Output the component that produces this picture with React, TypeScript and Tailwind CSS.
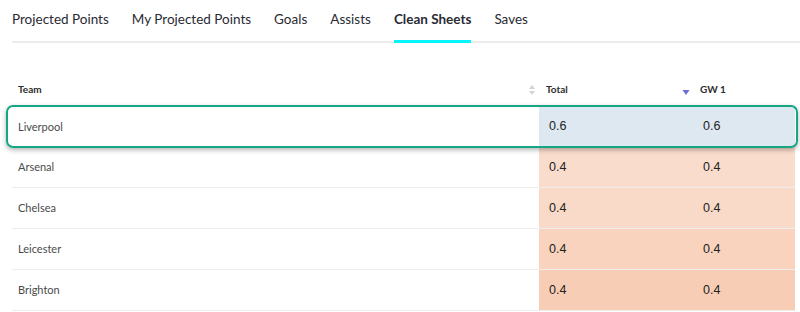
import React from 'react';

const tabs = ['Projected Points', 'My Projected Points', 'Goals', 'Assists', 'Clean Sheets', 'Saves'];

interface Row {
  team: string;
  total: string;
  gw: string;
  bg: string;
}

const rows: Row[] = [
  { team: 'Arsenal', total: '0.4', gw: '0.4', bg: 'bg-[#fadccd]' },
  { team: 'Chelsea', total: '0.4', gw: '0.4', bg: 'bg-[#f9d9c8]' },
  { team: 'Leicester', total: '0.4', gw: '0.4', bg: 'bg-[#f9d3be]' },
  { team: 'Brighton', total: '0.4', gw: '0.4', bg: 'bg-[#f8cdb6]' },
];

export default function App() {
  return (
    <div className="w-[800px] h-[312px] overflow-hidden bg-white font-['Lato',sans-serif]">
      {/* tabs */}
      <div className="ml-3 flex gap-[23px] border-b-2 border-[#ececec]">
        {tabs.map((t) => (
          <div
            key={t}
            className={
              t === 'Clean Sheets'
                ? 'pt-[9px] pb-[11px] -mb-[2px] border-b-[3px] border-[#04f5ff] text-[13.5px] font-bold text-[#2a2a33]'
                : 'pt-[9px] pb-[11px] -mb-[2px] border-b-[3px] border-transparent text-[13.5px] text-[#2a2a33]'
            }
          >
            {t}
          </div>
        ))}
      </div>

      {/* table */}
      <div className="mt-[36px] ml-3 mr-[5px]">
        <div className="grid grid-cols-[513px_154px_116px] h-[21px] items-center text-[10px] font-bold text-[#2d2d2d]">
          <div className="pl-[6px]">Team</div>
          <div className="flex items-center gap-[10px] pl-[3px]">
            <svg width="8" height="12" viewBox="0 0 8 12">
              <path d="M4 1 L7 5 H1 Z" fill="#d4d4d4" />
              <path d="M4 11 L7 7 H1 Z" fill="#d4d4d4" />
            </svg>
            <span>Total</span>
          </div>
          <div className="flex items-center gap-[10px] pl-[3px]">
            <svg width="8" height="12" viewBox="0 0 8 12" className="mt-[5px]">
              <path d="M4 9 L7.5 4 H0.5 Z" fill="#6c6cd6" />
            </svg>
            <span>GW 1</span>
          </div>
        </div>

        {/* highlighted row */}
        <div className="relative mt-[6px] grid grid-cols-[527px_154px_102px] h-[41px] items-center">
          <div className="pl-[6px] text-[11px] text-[#4a4a4a]">Liverpool</div>
          <div className="h-full flex items-center pl-[10px] bg-[#dde8f0] font-['Liberation_Sans',sans-serif] text-[12.5px] text-[#222]">0.6</div>
          <div className="h-full flex items-center pl-[10px] bg-[#dde8f0] font-['Liberation_Sans',sans-serif] text-[12.5px] text-[#222]">0.6</div>
          <div className="absolute -left-[6px] -right-[3px] -top-[1px] -bottom-[1px] rounded-[7px] border-[2.5px] border-[#17a683] shadow-[0_2px_5px_rgba(0,0,0,0.3)] pointer-events-none" />
        </div>

        {rows.map((r) => (
          <div key={r.team} className="grid grid-cols-[527px_154px_102px] h-[41px] items-center border-b border-[#eeeeee]">
            <div className="pl-[6px] text-[11px] text-[#4a4a4a]">{r.team}</div>
            <div className={`h-full flex items-center pl-[10px] ${r.bg} font-['Liberation_Sans',sans-serif] text-[12.5px] text-[#222]`}>{r.total}</div>
            <div className={`h-full flex items-center pl-[10px] ${r.bg} font-['Liberation_Sans',sans-serif] text-[12.5px] text-[#222]`}>{r.gw}</div>
          </div>
        ))}
      </div>
    </div>
  );
}
